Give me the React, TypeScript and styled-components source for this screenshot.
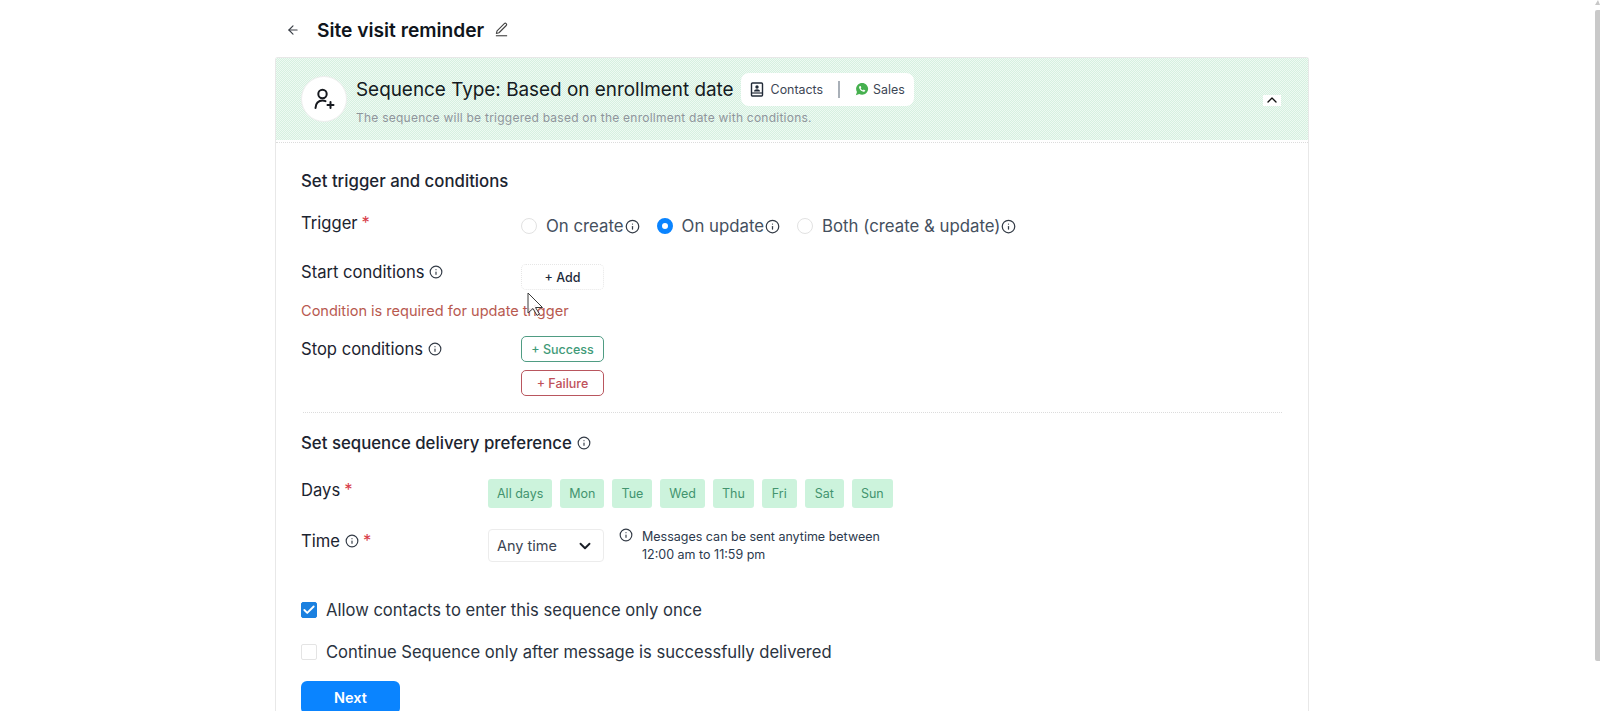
import React from "react";
import styled, { createGlobalStyle } from "styled-components";
import { ArrowLeft, Info, ChevronDown, ChevronUp, Check } from "lucide-react";
import { IoLogoWhatsapp } from "react-icons/io";

const Global = createGlobalStyle`
  html, body { margin: 0; padding: 0; height: 711px; overflow: hidden; background: #fff; }
  body { font-family: Inter, "Liberation Sans", sans-serif; color: #1c2430; }
  * { box-sizing: border-box; }
`;

const Page = styled.div`
  position: relative;
  height: 711px;
  overflow: hidden;
  padding-left: 275px;
`;
const ScrollArrow = styled.div`
  position: absolute;
  right: 0;
  top: 0;
  width: 0;
  height: 0;
  border-left: 3px solid transparent;
  border-right: 2px solid transparent;
  border-bottom: 5px solid #c8c8c8;
`;
const ScrollThumb = styled.div`
  position: absolute;
  right: 0;
  top: 10px;
  width: 5px;
  height: 651px;
  background: #c9c9c9;
  border-radius: 2px 0 0 2px;
`;
const TopBar = styled.header`
  display: flex;
  align-items: center;
  height: 57px;
  padding-left: 11px;
  padding-top: 2px;
`;
const BackIcon = styled(ArrowLeft)`
  width: 14px;
  height: 14px;
  color: #3a3f47;
`;
const PageTitle = styled.h1`
  margin: 0 10px 0 17px;
  font-size: 19.2px;
  font-weight: 600;
  color: #10151c;
`;
const Card = styled.section`
  width: 1034px;
  height: 700px;
  border: 1px solid #e8e8e8;
  border-bottom: none;
  border-radius: 3px 3px 0 0;
`;
const Banner = styled.div`
  display: flex;
  align-items: center;
  height: 82px;
  padding: 0 25px;
  background: repeating-conic-gradient(#d6f0e0 0 25%, #eefaf3 0 50%) 0 0 / 2px 2px;
`;
const BannerRule = styled.hr`
  margin: 2px 0 0;
  border: none;
  border-top: 1px dotted #dcdcdc;
`;
const Avatar = styled.div`
  width: 46px;
  height: 46px;
  border-radius: 50%;
  background: #fff;
  border: 1px solid #eeeeee;
  display: flex;
  align-items: center;
  justify-content: center;
  flex-shrink: 0;
  margin-right: 9px;
`;
const BannerText = styled.div`
  display: flex;
  flex-direction: column;
  flex: 1;
  padding-bottom: 1px;
`;
const BannerHead = styled.div`
  display: flex;
  align-items: center;
`;
const BannerTitle = styled.div`
  font-size: 18.9px;
  color: #141a22;
  font-weight: 400;
  white-space: nowrap;
`;
const Tags = styled.div`
  display: flex;
  align-items: center;
  height: 33px;
  margin-left: 7px;
  padding: 0 9px;
  background: #fff;
  border-radius: 8px;
  font-size: 12.4px;
  color: #3c4654;
`;
const Tag = styled.span<{ $gap: number }>`
  display: inline-flex;
  align-items: center;
  gap: ${(p) => p.$gap}px;
`;
const TagSep = styled.span`
  width: 2px;
  height: 17px;
  background: #a9b0b8;
  margin: 0 15px;
`;
const BannerSub = styled.div`
  font-size: 12px;
  color: #8f959c;
  margin-top: 4px;
  letter-spacing: 0.24px;
`;
const Toggle = styled.div`
  width: 18px;
  height: 11px;
  margin: 2px 2px 0 0;
  background: #fff;
  display: flex;
  align-items: center;
  justify-content: center;
  & > svg {
    flex-shrink: 0;
  }
`;
const Body = styled.div`
  position: relative;
  padding: 28px 25px 0;
`;
const SectionTitle = styled.h2<{ $top?: number }>`
  margin: ${(p) => p.$top ?? 0}px 0 0;
  display: flex;
  align-items: center;
  gap: 5px;
  height: 20px;
  font-size: 16.8px;
  font-weight: 500;
  color: #1c2430;
`;
const Row = styled.div<{ $top: number; $col: number }>`
  display: grid;
  grid-template-columns: ${(p) => p.$col}px 1fr;
  margin-top: ${(p) => p.$top}px;
`;
const Label = styled.div<{ $drop?: number }>`
  display: flex;
  align-items: center;
  gap: 5px;
  height: 20px;
  margin-top: ${(p) => p.$drop ?? 0}px;
  font-size: 16.6px;
  color: #1c2430;
`;
const Star = styled.span`
  color: #d8404a;
  margin-left: -1px;
`;
const InfoIcon = styled(Info)`
  width: 14px;
  height: 14px;
  color: #333b46;
  flex-shrink: 0;
`;
const RadioInfo = styled(InfoIcon)`
  width: 15px;
  height: 15px;
`;
const Radios = styled.div`
  display: flex;
  align-items: center;
  height: 20px;
  margin-top: 4px;
`;
const RadioItem = styled.label`
  display: flex;
  align-items: center;
  gap: 1px;
  margin-right: 17px;
  font-size: 16.8px;
  color: #45505e;
`;
const RadioDot = styled.span<{ $on?: boolean }>`
  width: 16px;
  height: 16px;
  border-radius: 50%;
  margin-right: 8px;
  background: #fff;
  border: ${(p) => (p.$on ? "5px solid #0a84ff" : "1px solid #e2e2e2")};
`;
const Stack = styled.div<{ $drop?: number }>`
  display: flex;
  flex-direction: column;
  gap: 8px;
  margin-top: ${(p) => p.$drop ?? 0}px;
`;
const OutlineButton = styled.button<{ $tone: "plain" | "good" | "bad" }>`
  width: 83px;
  height: 26px;
  padding: 0;
  font: 500 12.5px Inter, "Liberation Sans", sans-serif;
  background: #fff;
  border-radius: 5px;
  color: ${(p) => ({ plain: "#1c2a3a", good: "#3f9a78", bad: "#c0515a" }[p.$tone])};
  border: 1px solid ${(p) => ({ plain: "#e6e6e6", good: "#4f9c83", bad: "#b9565e" }[p.$tone])};
  border-style: ${(p) => (p.$tone === "plain" ? "dotted" : "solid")};
`;
const ErrorText = styled.div`
  margin-top: 11px;
  height: 20px;
  line-height: 20px;
  font-size: 14.55px;
  color: #b85a50;
`;
const Divider = styled.hr`
  margin: 16px 1px 0 2px;
  border: none;
  border-top: 1px dotted #dcdcdc;
`;
const Chips = styled.div`
  display: flex;
  gap: 8px;
`;
const Chip = styled.span<{ $pad: number }>`
  display: flex;
  align-items: center;
  justify-content: center;
  height: 29px;
  padding: 0 ${(p) => p.$pad}px;
  background: #ccf3dc;
  border-radius: 3px;
  color: #43946f;
  font-size: 12.5px;
`;
const TimeCell = styled.div`
  display: flex;
  align-items: flex-start;
`;
const Select = styled.div`
  display: flex;
  align-items: center;
  justify-content: space-between;
  width: 116px;
  height: 33px;
  padding: 0 9px 0 8px;
  border: 1px solid #ececec;
  border-radius: 4px;
  font-size: 14.5px;
  color: #3a4452;
`;
const Note = styled.div`
  display: flex;
  gap: 9px;
  margin: -1px 0 0 15px;
  font-size: 12.5px;
  line-height: 18px;
  color: #2c3a4d;
`;
const CheckRow = styled.label<{ $top: number }>`
  display: flex;
  align-items: center;
  gap: 9px;
  height: 20px;
  margin-top: ${(p) => p.$top}px;
  font-size: 16.6px;
  color: #2a3340;
`;
const Box = styled.span<{ $on?: boolean }>`
  width: 16px;
  height: 16px;
  border-radius: 2px;
  display: flex;
  align-items: center;
  justify-content: center;
  background: ${(p) => (p.$on ? "#1a80e0" : "#fff")};
  border: 1px solid ${(p) => (p.$on ? "#1a80e0" : "#e4e4e4")};
  color: #fff;
`;
const NextButton = styled.button`
  display: block;
  width: 99px;
  height: 33px;
  margin-top: 19px;
  border: none;
  border-radius: 6px;
  background: #0a84ff;
  color: #fff;
  font: 600 14.5px Inter, "Liberation Sans", sans-serif;
`;
const Cursor = styled.svg`
  position: absolute;
  left: 251px;
  top: 149px;
`;

const days = [
  { label: "All days", pad: 9 },
  { label: "Mon", pad: 9 },
  { label: "Tue", pad: 9 },
  { label: "Wed", pad: 9 },
  { label: "Thu", pad: 9 },
  { label: "Fri", pad: 10 },
  { label: "Sat", pad: 10 },
  { label: "Sun", pad: 9 },
];

export default function App() {
  return (
    <Page>
      <Global />
      <ScrollArrow />
      <ScrollThumb />
      <TopBar>
        <BackIcon />
        <PageTitle>Site visit reminder</PageTitle>
        <svg width="15" height="15" viewBox="0 0 24 24" fill="none" stroke="#444" strokeWidth="1.8" strokeLinejoin="round">
          <path d="M3 22h18" />
          <path d="M16.5 2.5a2.2 2.2 0 0 1 3.1 3.1L8 17.2l-4.2 1.1 1.1-4.2z" />
        </svg>
      </TopBar>
      <Card>
        <Banner>
          <Avatar>
            <svg width="24" height="24" viewBox="0 0 24 24" fill="none" stroke="#16191f" strokeWidth="2" strokeLinecap="round">
              <circle cx="10.5" cy="7" r="4.2" />
              <path d="M3.5 21c0-4.5 3-7.5 7-7.5 1.2 0 2 .2 3 .6" />
              <path d="M15.5 18h6M18.5 15v6" />
            </svg>
          </Avatar>
          <BannerText>
            <BannerHead>
              <BannerTitle>Sequence Type: Based on enrollment date</BannerTitle>
              <Tags>
                <Tag $gap={7}>
                  <svg width="14" height="15" viewBox="0 0 14 15" fill="none">
                    <path d="M2.5 1h9a1 1 0 0 1 1 1v11a1 1 0 0 1-1 1h-9a1 1 0 0 1-1-1V2a1 1 0 0 1 1-1z" stroke="#222b38" strokeWidth="1.4" />
                    <path d="M1.5 11h11" stroke="#222b38" strokeWidth="1.2" />
                    <circle cx="7" cy="5" r="1.7" fill="#222b38" />
                    <path d="M4 9.4c0-1.4 1.3-2.2 3-2.2s3 .8 3 2.2z" fill="#222b38" />
                  </svg>
                  Contacts
                </Tag>
                <TagSep />
                <Tag $gap={4}>
                  <IoLogoWhatsapp size={14} color="#46b04f" />
                  Sales
                </Tag>
              </Tags>
            </BannerHead>
            <BannerSub>The sequence will be triggered based on the enrollment date with conditions.</BannerSub>
          </BannerText>
          <Toggle>
            <ChevronUp size={16} color="#111" strokeWidth={2} />
          </Toggle>
        </Banner>
        <BannerRule />
        <Body>
          <SectionTitle>Set trigger and conditions</SectionTitle>
          <Row $top={21} $col={220}>
            <Label $drop={1}>
              Trigger <Star>*</Star>
            </Label>
            <Radios>
              <RadioItem>
                <RadioDot />
                On create
                <RadioInfo />
              </RadioItem>
              <RadioItem>
                <RadioDot $on />
                On update
                <RadioInfo />
              </RadioItem>
              <RadioItem>
                <RadioDot />
                Both (create &amp; update)
                <RadioInfo />
              </RadioItem>
            </Radios>
          </Row>
          <Row $top={26} $col={220}>
            <Label>
              Start conditions <InfoIcon />
            </Label>
            <Stack $drop={2}>
              <OutlineButton $tone="plain">+ Add</OutlineButton>
            </Stack>
          </Row>
          <ErrorText>Condition is required for update trigger</ErrorText>
          <Row $top={15} $col={220}>
            <Label $drop={3}>
              Stop conditions <InfoIcon />
            </Label>
            <Stack>
              <OutlineButton $tone="good">+ Success</OutlineButton>
              <OutlineButton $tone="bad">+ Failure</OutlineButton>
            </Stack>
          </Row>
          <Divider />
          <SectionTitle $top={20}>
            Set sequence delivery preference <InfoIcon />
          </SectionTitle>
          <Row $top={26} $col={187}>
            <Label $drop={1}>
              Days <Star>*</Star>
            </Label>
            <Chips>
              {days.map((d) => (
                <Chip key={d.label} $pad={d.pad}>
                  {d.label}
                </Chip>
              ))}
            </Chips>
          </Row>
          <Row $top={21} $col={187}>
            <Label $drop={2}>
              Time <InfoIcon /> <Star>*</Star>
            </Label>
            <TimeCell>
              <Select>
                Any time
                <ChevronDown size={18} color="#1a1f27" strokeWidth={2.5} />
              </Select>
              <Note>
                <InfoIcon />
                <span>
                  Messages can be sent anytime between
                  <br />
                  12:00 am to 11:59 pm
                </span>
              </Note>
            </TimeCell>
          </Row>
          <CheckRow $top={36}>
            <Box $on>
              <Check size={14} strokeWidth={3.2} />
            </Box>
            Allow contacts to enter this sequence only once
          </CheckRow>
          <CheckRow $top={22}>
            <Box />
            Continue Sequence only after message is successfully delivered
          </CheckRow>
          <NextButton>Next</NextButton>
          <Cursor width="18" height="25" viewBox="0 0 18 25">
            <path d="M1 1v20l5-4.5 4 7 2.5-1.5-4-6.5h7z" fill="#fff" fillOpacity="0.85" stroke="#3a3a3a" strokeWidth="1" />
          </Cursor>
        </Body>
      </Card>
    </Page>
  );
}
